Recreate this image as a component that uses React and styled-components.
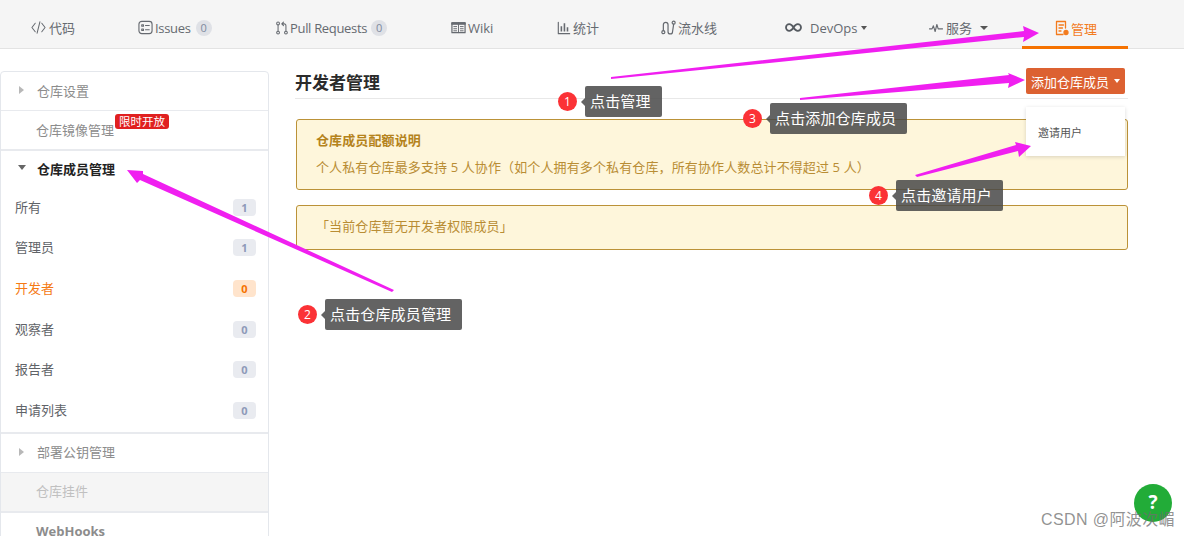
import React from "react";
import styled, { createGlobalStyle } from "styled-components";

const GlobalStyle = createGlobalStyle`
html, body {
    margin: 0;
    padding: 0;
    height: 536px;
    overflow: hidden;
    background: #fff;
    font-family: "Open Sans", "Noto Sans CJK SC", sans-serif;
}
* { box-sizing: border-box; }
`;

const Page = styled.div`
position: relative;
width: 1184px;
height: 536px;
overflow: hidden;
`;

const Nav = styled.div`
display: flex;
height: 49px;
padding-left: 31px;
background: #f5f5f5;
border-bottom: 1px solid #e3e3e3;
`;

const Tab = styled.div`
display: flex;
align-items: center;
gap: ${({$gap}) => $gap || 4}px;
width: ${({$width}) => $width}px;
height: 49px;
padding-top: ${({$active}) => $active ? 10 : 6}px;
padding-left: ${({$pad}) => $pad || 0}px;
font-size: 13px;
color: ${({$active}) => $active ? "#f37b1d" : "#666a70"};
border-bottom: ${({$active}) => $active ? "3px solid #f57200" : "none"};
svg { flex: none; }
`;

const TabText = styled.span`
letter-spacing: -0.32px;
margin-right: 3px;
`;

const Count = styled.span`
display: inline-flex;
align-items: center;
justify-content: center;
width: 16px;
height: 16px;
border-radius: 50%;
background: #dfe1e6;
color: #7e8a9e;
font-size: 11px;
`;

const Caret = styled.span`
width: 0;
height: 0;
margin-left: ${({$left}) => $left || 0}px;
border-left: ${({$w}) => $w || 3.5}px solid transparent;
border-right: ${({$w}) => $w || 3.5}px solid transparent;
border-top: 4px solid ${({$color}) => $color || "#555"};
`;

const Content = styled.div`
display: flex;
align-items: flex-start;
padding: 22px 0 0 0;
`;

const Sidebar = styled.div`
flex: none;
width: 269px;
background: #fff;
border: 1px solid #e4e7ec;
border-radius: 4px 4px 0 0;
`;

const SideItem = styled.div`
position: relative;
display: flex;
align-items: center;
height: ${({$h}) => $h || 39}px;
padding-left: ${({$pad}) => $pad || 35}px;
padding-bottom: 2px;
font-size: 13px;
font-weight: ${({$bold}) => $bold ? 700 : 400};
color: ${({$color}) => $color || "#8c8c8c"};
background: ${({$bg}) => $bg || "transparent"};
border-bottom: ${({$line}) => $line ?? 1}px solid #e8eaee;
`;

const Arrow = styled.span`
position: absolute;
left: 18px;
top: 14px;
width: 0;
height: 0;
border-top: 4px solid transparent;
border-bottom: 4px solid transparent;
border-left: 5px solid #b8b8b8;
`;

const ArrowDown = styled.span`
position: absolute;
left: 17px;
top: 14px;
width: 0;
height: 0;
border-left: 4px solid transparent;
border-right: 4px solid transparent;
border-top: 5px solid #666;
`;

const Promo = styled.span`
position: absolute;
left: 114px;
top: 3px;
height: 15px;
padding: 0 4px;
border-radius: 3px;
background: #e02020;
color: #fff;
font-size: 11.5px;
line-height: 15px;
`;

const MemberList = styled.div`
padding-bottom: 1px;
border-bottom: 2px solid #e8eaee;
`;

const MemberRow = styled.div`
display: flex;
align-items: center;
justify-content: space-between;
height: 40.6px;
padding: 0 12px 0 14px;
font-size: 13px;
color: ${({$active}) => $active ? "#f57a14" : "#5f6368"};
`;

const RowName = styled.span`
margin-top: -2px;
`;

const RowBadge = styled.span`
display: flex;
align-items: center;
justify-content: center;
width: 23px;
height: 17px;
border-radius: 4px;
font-size: 11px;
font-weight: 700;
background: ${({$active}) => $active ? "#ffe4cc" : "#e9ebf0"};
color: ${({$active}) => $active ? "#f57200" : "#8e9ab8"};
`;

const Main = styled.div`
flex: none;
width: 833px;
margin: -2px 0 0 26px;
`;

const Header = styled.div`
display: flex;
align-items: center;
justify-content: space-between;
height: 30px;
padding-bottom: 5px;
border-bottom: 1px solid #e8e8e8;
`;

const Title = styled.div`
font-size: 17px;
font-weight: 700;
color: #2b2b2b;
`;

const AddWrap = styled.div`
position: relative;
margin-right: 3px;
`;

const AddButton = styled.div`
display: flex;
align-items: center;
justify-content: center;
gap: 5px;
width: 99px;
height: 26px;
border-radius: 2px;
background: #dc6131;
color: #fff;
font-size: 13px;
`;

const Dropdown = styled.div`
position: absolute;
z-index: 2;
top: 39px;
left: 0;
width: 99px;
height: 49px;
padding-left: 12px;
display: flex;
align-items: center;
background: #fff;
box-shadow: 0 1px 4px rgba(0, 0, 0, 0.15);
color: #555;
font-size: 11px;
`;

const Notice = styled.div`
display: flex;
flex-direction: column;
justify-content: center;
gap: ${({$gap}) => $gap || 0}px;
height: ${({$h}) => $h}px;
margin: ${({$top}) => $top}px 0 0 1px;
padding-left: ${({$pad}) => $pad}px;
padding-bottom: 4px;
background: #fef6db;
border: 1px solid #bb9238;
border-radius: 3px;
color: #b98d34;
font-size: 13px;
letter-spacing: 0.12px;
`;

const NoticeTitle = styled.div`
font-weight: 700;
color: #b5831c;
`;

const Overlay = styled.svg`
position: absolute;
z-index: 3;
left: 0;
top: 0;
pointer-events: none;
`;

const Step = styled.div`
position: absolute;
z-index: 4;
left: ${({$x}) => $x}px;
top: ${({$y}) => $y}px;
display: flex;
align-items: center;
`;

const StepDot = styled.span`
display: flex;
align-items: center;
justify-content: center;
width: 19px;
height: 19px;
border-radius: 50%;
background: #fb3236;
color: #fff;
font-size: 12px;
`;

const StepLabel = styled.div`
position: relative;
display: flex;
align-items: center;
height: 31px;
margin-left: 8px;
padding: 0 11px 2px 5px;
border-radius: 2px;
background: rgba(72, 72, 72, 0.85);
color: #fff;
font-size: 15px;
letter-spacing: 0.15px;
white-space: nowrap;
&::before {
    content: "";
    position: absolute;
    left: -4px;
    top: 12px;
    border-top: 4px solid transparent;
    border-bottom: 4px solid transparent;
    border-right: 4px solid rgba(72, 72, 72, 0.85);
}
`;

const Help = styled.div`
position: absolute;
z-index: 2;
left: 1134px;
top: 484px;
width: 38px;
height: 38px;
padding-bottom: 3px;
border-radius: 50%;
background: #22ac38;
color: #fff;
font-size: 19px;
font-weight: 700;
display: flex;
align-items: center;
justify-content: center;
`;

const Watermark = styled.div`
position: absolute;
z-index: 3;
left: 1041px;
top: 506px;
color: rgba(110, 110, 110, 0.75);
font-family: "Liberation Sans", "Noto Sans CJK SC", sans-serif;
font-size: 16px;
letter-spacing: 0.4px;
white-space: nowrap;
`;

const Icon = ({ size = 15, width = 1.1, children }) => (
    <svg width={size} height={size} viewBox="0 0 16 16" fill="none" stroke="currentColor" strokeWidth={width} strokeLinecap="round" strokeLinejoin="round">
        {children}
    </svg>
);

const CodeIcon = () => (
    <Icon><path d="M4.5 3.5 1 8l3.5 4.5M11.5 3.5 15 8l-3.5 4.5M9.5 2l-3 12" /></Icon>
);
const IssueIcon = () => (
    <Icon width={1.2}>
        <rect x="1" y="1.5" width="14" height="13" rx="3" />
        <path d="M4 5h1.8v1.6H4zM8 5.8h4M4 9.6h1.8v1.6H4zM8 10.4h4" />
    </Icon>
);
const PullIcon = () => (
    <Icon width={1.2} size={14}>
        <circle cx="3.5" cy="2.8" r="1.6" /><circle cx="3.5" cy="13.2" r="1.6" /><circle cx="12.5" cy="13.2" r="1.6" />
        <path d="M3.5 4.5v7M12.5 11.5V5.3a2 2 0 0 0-2-2H8M9.7 1.3 7.7 3.3l2 2" />
    </Icon>
);
const WikiIcon = () => (
    <Icon width={1.3}>
        <path d="M1 3h14v10.5H1z" fill="none" />
        <path d="M1 3h14v1.5H1z" fill="currentColor" />
        <path d="M8 3v10.5M3 7h3M3 9.3h3M3 11.5h3M10 7h3M10 9.3h3M10 11.5h3" strokeWidth="1" />
    </Icon>
);
const ChartIcon = () => (
    <Icon width={1.3} size={14}>
        <path d="M1.5 1.5v13h13" />
        <path d="M5 12V6M8.5 12V2.5M12 12V7" strokeWidth="1.8" strokeLinecap="butt" />
    </Icon>
);
const PipeIcon = () => (
    <Icon width={1.3}>
        <circle cx="2.5" cy="13" r="1.6" /><circle cx="13.5" cy="2.8" r="1.6" />
        <path d="M2.5 11.4V5a2.5 2.5 0 0 1 5 0v7.5a2.4 2.4 0 0 0 4.8 0l1.2-8" />
    </Icon>
);
const LoopIcon = () => (
    <svg width="17" height="15" viewBox="0 0 17 15" fill="none" stroke="#555a60" strokeWidth="1.8">
        <path d="M8.5 7.5C7 5 5.8 4.2 4.3 4.2a3.3 3.3 0 0 0 0 6.6c1.5 0 2.7-.8 4.2-3.3 1.5-2.5 2.7-3.3 4.2-3.3a3.3 3.3 0 0 1 0 6.6c-1.5 0-2.7-.8-4.2-3.3Z" />
    </svg>
);
const PulseIcon = () => (
    <Icon width={1.3} size={14}><path d="M.5 9h3l1.5-3.5 2 6.5 2-8 1.5 5h5" /></Icon>
);
const ManageIcon = () => (
    <Icon width={1.3} size={16}>
        <path d="M9 14.5H2.5V1.5h9V8" />
        <path d="M5 5h4.5M5 8h3.5M5 11h2" />
        <circle cx="12" cy="12.5" r="2" fill="currentColor" />
    </Icon>
);

const roles = [
    { name: "所有", count: 1 },
    { name: "管理员", count: 1 },
    { name: "开发者", count: 0, active: true },
    { name: "观察者", count: 0 },
    { name: "报告者", count: 0 },
    { name: "申请列表", count: 0 },
];

const steps = [
    { n: 1, x: 558, y: 86, text: "点击管理" },
    { n: 2, x: 298, y: 299, text: "点击仓库成员管理" },
    { n: 3, x: 743, y: 103, text: "点击添加仓库成员" },
    { n: 4, x: 869, y: 180, text: "点击邀请用户" },
];

const App = () => {
    return (
        <Page>
            <GlobalStyle />
            <Nav>
                <Tab $width={107} $gap={3}><CodeIcon />代码</Tab>
                <Tab $width={137} $gap={2}><IssueIcon /><TabText>Issues</TabText><Count>0</Count></Tab>
                <Tab $width={176} $gap={1}><PullIcon /><TabText>Pull Requests</TabText><Count>0</Count></Tab>
                <Tab $width={106} $gap={2}><WikiIcon />Wiki</Tab>
                <Tab $width={104} $gap={2}><ChartIcon />统计</Tab>
                <Tab $width={124} $gap={2}><PipeIcon />流水线</Tab>
                <Tab $width={144} $gap={8}><LoopIcon />DevOps<Caret $left={-5} /></Tab>
                <Tab $width={93} $gap={3}><PulseIcon />服务<Caret $left={5} $w={4} /></Tab>
                <Tab $width={106} $pad={32} $gap={1} $active><ManageIcon />管理</Tab>
            </Nav>
            <Content>
                <Sidebar>
                    <SideItem $pad={36}><Arrow />仓库设置</SideItem>
                    <SideItem $pad={35} $h={40} $line={2}>仓库镜像管理<Promo>限时开放</Promo></SideItem>
                    <SideItem $pad={36} $bold $color="#222" $h={36} $line={0}><ArrowDown />仓库成员管理</SideItem>
                    <MemberList>
                        {roles.map((role) => (
                            <MemberRow key={role.name} $active={role.active}>
                                <RowName>{role.name}</RowName>
                                <RowBadge $active={role.active}>{role.count}</RowBadge>
                            </MemberRow>
                        ))}
                    </MemberList>
                    <SideItem $pad={36}><Arrow />部署公钥管理</SideItem>
                    <SideItem $bg="#f5f5f5" $color="#c0c0c0" $h={40} $line={2}>仓库挂件</SideItem>
                    <SideItem $bold $h={40}>WebHooks</SideItem>
                </Sidebar>
                <Main>
                    <Header>
                        <Title>开发者管理</Title>
                        <AddWrap>
                            <AddButton>添加仓库成员<Caret $color="#fff" /></AddButton>
                            <Dropdown>邀请用户</Dropdown>
                        </AddWrap>
                    </Header>
                    <Notice $h={71} $top={20} $pad={19} $gap={8}>
                        <NoticeTitle>仓库成员配额说明</NoticeTitle>
                        <div>个人私有仓库最多支持 5 人协作（如个人拥有多个私有仓库，所有协作人数总计不得超过 5 人）</div>
                    </Notice>
                    <Notice $h={45} $top={15} $pad={19}>「当前仓库暂无开发者权限成员」</Notice>
                </Main>
            </Content>
            <Overlay width="1184" height="536" viewBox="0 0 1184 536">
                <g fill="#f01ff0">
                    <polygon points="611,77 1024,31 1023,26 1039,33 1023,42 1024,37 611,79" />
                    <polygon points="800,98 1009,75 1008,73 1025,80 1008,88 1009,83 800,100" />
                    <polygon points="915,175 1016,145 1015,142 1031,146 1019,157 1018,151 917,177" />
                    <polygon points="394,290 143,174 143,171 127,170 137,183 140,180 392,292" />
                </g>
            </Overlay>
            {steps.map((step) => (
                <Step key={step.n} $x={step.x} $y={step.y}>
                    <StepDot>{step.n}</StepDot>
                    <StepLabel>{step.text}</StepLabel>
                </Step>
            ))}
            <Help>?</Help>
            <Watermark>CSDN @阿波次嵋</Watermark>
        </Page>
    );
};

export default App;
